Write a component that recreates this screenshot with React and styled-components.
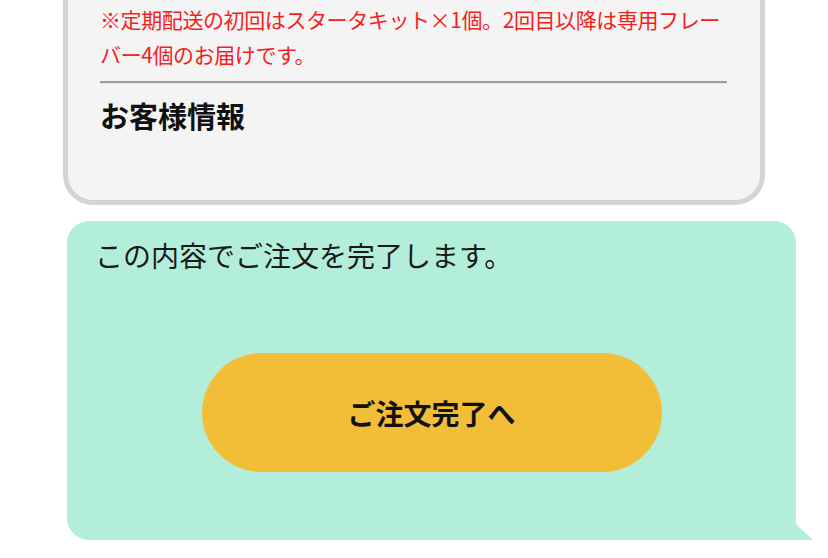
import styled, { createGlobalStyle } from "styled-components";

const GlobalStyle = createGlobalStyle`
  html, body {
    margin: 0;
    padding: 0;
    background: #ffffff;
  }
  body {
    font-family: "Noto Sans CJK JP", "Noto Sans", sans-serif;
    color: #111;
  }
`;

const Page = styled.main`
  width: 828px;
  padding-left: 63px;
  box-sizing: border-box;
`;

// 注文内容カード（上部は画面外）
const Card = styled.section`
  width: 702px;
  box-sizing: border-box;
  background: #f4f4f4;
  border: 5px solid #d4d4d4;
  border-top: none;
  border-radius: 0 0 30px 30px;
  padding: 2px 33px 0 32px;
  height: 205px;
`;

const Note = styled.p`
  margin: 0;
  color: #f31e1e;
  font-size: 21px;
  line-height: 35px;
  letter-spacing: -0.4px;
`;

const Divider = styled.hr`
  margin: 9px 0 0;
  border: none;
  border-top: 2px solid #9c9c9c;
  border-bottom: 1px solid #e6e6e6;
`;

const Heading = styled.h2`
  margin: 0;
  padding-top: 13px;
  font-size: 29px;
  line-height: 36px;
  font-weight: 700;
  color: #111;
`;

// 吹き出し
const Bubble = styled.section`
  position: relative;
  margin: 16px 0 0 4px;
  width: 729px;
  box-sizing: border-box;
  background: #b3eedb;
  border-radius: 22px 22px 0 22px;
  padding: 14px 28px 68px;
  display: flex;
  flex-direction: column;

  &::after {
    content: "";
    position: absolute;
    right: -17px;
    bottom: 0;
    width: 0;
    height: 0;
    border-bottom: 16px solid #b3eedb;
    border-right: 17px solid transparent;
  }
`;

const Message = styled.p`
  margin: 0;
  font-size: 28px;
  line-height: 40px;
  color: #1a1a1a;
`;

const CompleteButton = styled.button`
  align-self: center;
  margin-top: 78px;
  width: 460px;
  height: 119px;
  border: none;
  border-radius: 60px;
  background: #f2be37;
  font-family: inherit;
  font-size: 28px;
  font-weight: 700;
  color: #111;
  cursor: pointer;
`;

const App = () => {
  return (
    <Page>
      <GlobalStyle />
      <Card>
        <Note>
          ※定期配送の初回はスタータキット×1個。2回目以降は専用フレー
          <br />
          バー4個のお届けです。
        </Note>
        <Divider />
        <Heading>お客様情報</Heading>
      </Card>
      <Bubble>
        <Message>この内容でご注文を完了します。</Message>
        <CompleteButton>ご注文完了へ</CompleteButton>
      </Bubble>
    </Page>
  );
};

export default App;
